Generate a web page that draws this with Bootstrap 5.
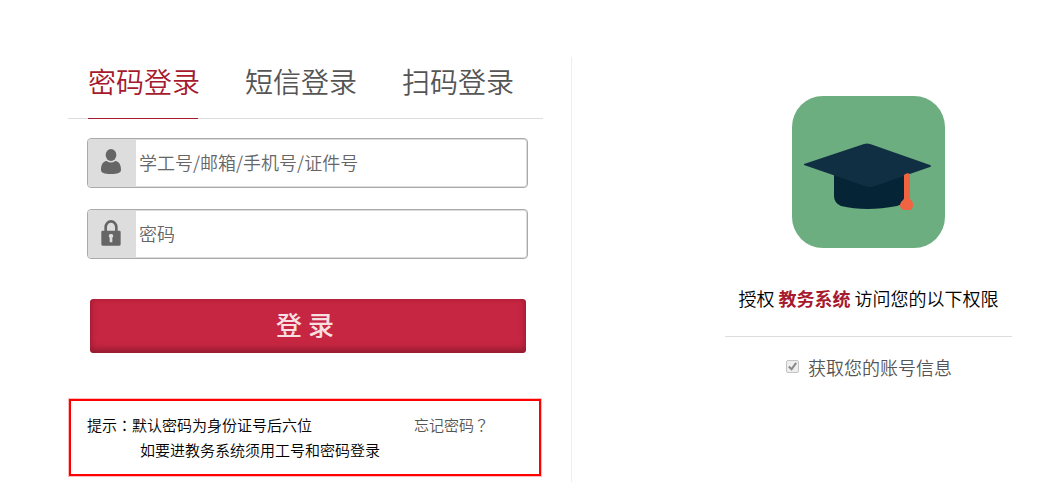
<!DOCTYPE html>
<html lang="zh-CN">
<head>
<meta charset="utf-8">
<meta name="viewport" content="width=device-width, initial-scale=1">
<title>密码登录</title>
<link href="https://cdn.jsdelivr.net/npm/bootstrap@5.3.0/dist/css/bootstrap.min.css" rel="stylesheet">
<style>
  body { font-family: "Noto Sans CJK SC", sans-serif; font-weight: 350; color: #000; background: #fff; }
  .auth-page { display: grid; grid-template-columns: 572fr 479fr; padding-top: 57px; }
  .login-side { border-right: 1px solid #eee; padding: 0 28px 6px 68px; }
  .login-tabs { height: 62px; border-bottom: 1px solid #ddd; padding-left: 20px; gap: 47px; }
  .login-tabs .nav-link { padding: 0; height: 62px; line-height: 48px; font-size: 28px; color: #555; border-bottom: 1px solid transparent; border-radius: 0; width: 110px; white-space: nowrap; }
  .login-tabs .nav-link.active { color: #a6192e; border-bottom-color: #a6192e; }
  .login-form { padding: 19px 15px 0 19px; }
  .field { height: 50px; border: 1px solid #aaa; border-radius: 4px; box-shadow: inset 0 0 0 1px #ddd; margin-bottom: 21px; overflow: hidden; }
  .field .input-group-text { width: 48px; padding: 0 2px 2px 0; background: #ddd; border: 0; border-radius: 0; justify-content: center; }
  .field .form-control { border: 0; padding: 0 4px 2px; font-size: 18px; font-weight: 350; background: transparent; }
  .field .form-control::placeholder { color: #666; opacity: 1; }
  .login-btn { display: block; width: calc(100% - 5px); height: 54px; margin: 40px 2px 0 3px; padding: 0 6px 4px 0; border: 0; border-radius: 4px; background: #c62641; color: #f8dfe2; font-size: 26px; font-weight: 500; line-height: 50px; box-shadow: inset 0 -4px 6px #941d31, inset 0 0 5px #a91f36; }
  .login-btn:hover { background: #b8213a; color: #fff; }
  .tips { border: 2px solid #f00; box-shadow: 0 0 0 1px #fbb; margin: 46px 2px 0 1px; padding: 11px 16px 12px; font-size: 15px; line-height: 25px; }
  .tips .second { padding-left: 53px; }
  .tips a { color: #555; text-decoration: none; margin-right: 34px; }
  .centred-mark { font-family: "Noto Sans CJK TC", sans-serif; }
  .grant-side { padding: 39px 39px 0 153px; }
  .app-icon { width: 153px; height: 152px; }
  .grant-text { font-size: 18px; line-height: 28px; margin-top: 36px; white-space: nowrap; }
  .grant-text strong { color: #a6192e; }
  .grant-list { border-top: 1px solid #ddd; margin-top: 24px; padding-top: 16px; font-size: 18px; line-height: 28px; color: #555; }
  .grant-list .form-check-input { width: 13px; height: 13px; margin: 0 1px 2px; border: 1px solid #c4c4c4; border-radius: 2px; background-color: #eee; opacity: 1; }
  .grant-list .form-check-input:checked { background-image: url("data:image/svg+xml,%3csvg xmlns='http://www.w3.org/2000/svg' viewBox='0 0 12 12'%3e%3cpath fill='none' stroke='%23888' stroke-width='2.2' d='m2 6 3 3 5-7'/%3e%3c/svg%3e"); }
  @media (max-width: 860px) {
    .auth-page { grid-template-columns: 1fr; }
    .login-side { border-right: 0; padding: 0 16px 6px; }
    .login-tabs { gap: 20px; padding-left: 0; }
    .grant-side { padding: 39px 16px; }
  }
</style>
</head>
<body>
<main class="auth-page">
  <section class="login-side">
    <nav class="nav login-tabs flex-nowrap">
      <a class="nav-link active" href="#password" aria-current="page">密码登录</a>
      <a class="nav-link" href="#sms">短信登录</a>
      <a class="nav-link" href="#scan">扫码登录</a>
    </nav>
    <form class="login-form">
      <div class="input-group field">
        <label class="input-group-text" for="account" aria-label="账号">
          <svg width="20" height="26" viewBox="0 0 60 78" fill="#666" aria-hidden="true"><ellipse cx="30" cy="18" rx="16" ry="18"/><path d="M17 36q13 9 26 0c12 2 17 12 17 27 0 8-10 12-30 12S0 71 0 63C0 48 5 38 17 36z"/></svg>
        </label>
        <input class="form-control" id="account" type="text" placeholder="学工号/邮箱/手机号/证件号">
      </div>
      <div class="input-group field">
        <label class="input-group-text" for="password" aria-label="密码">
          <svg width="20" height="26" viewBox="0 0 60 78" fill="#666" aria-hidden="true"><path d="M14 36V22a16 18 0 0 1 32 0v14" fill="none" stroke="#666" stroke-width="8"/><path fill-rule="evenodd" d="M5 32h50q4 0 4 4v37q0 4-4 4H5q-4 0-4-4V36q0-4 4-4zM30 42a6 6 0 0 0-4 11v14h8V53a6 6 0 0 0-4-11z"/></svg>
        </label>
        <input class="form-control" id="password" type="password" placeholder="密码">
      </div>
      <button class="btn login-btn" type="button">登 录</button>
    </form>
    <div class="tips">
      <div class="d-flex justify-content-between">
        <span>提示<span class="centred-mark" lang="zh-TW">：</span>默认密码为身份证号后六位</span>
        <a href="#forgot">忘记密码<span class="centred-mark" lang="zh-TW">？</span></a>
      </div>
      <div class="second">如要进教务系统须用工号和密码登录</div>
    </div>
  </section>
  <section class="grant-side">
    <svg class="app-icon d-block mx-auto" viewBox="0 0 153 152" role="img" aria-label="教务系统">
      <rect width="153" height="152" rx="31" fill="#6dae80"/>
      <path d="M42 72h70v30q0 6-7 8-31 6-56 0-7-3-7-10z" fill="#052536"/>
      <path d="M12 68 69 49q6-3 12 0l57 20q2 1 0 2L83 90q-5 2-10 0L12 69z" fill="#112f42"/>
      <path d="M112 79q3-3 6-1v26h-6z" fill="#f16442"/>
      <path d="M112 103h6q3 2 3 6 0 5-4 5h-5q-4-1-4-5 1-4 4-6z" fill="#f16442"/>
    </svg>
    <p class="grant-text text-center mb-0">授权 <strong>教务系统</strong> 访问您的以下权限</p>
    <div class="grant-list d-flex justify-content-center">
      <div class="d-flex align-items-center gap-2">
        <input class="form-check-input" id="info" type="checkbox" checked disabled>
        <label for="info">获取您的账号信息</label>
      </div>
    </div>
  </section>
</main>
<script src="https://cdn.jsdelivr.net/npm/bootstrap@5.3.0/dist/js/bootstrap.bundle.min.js"></script>
</body>
</html>
